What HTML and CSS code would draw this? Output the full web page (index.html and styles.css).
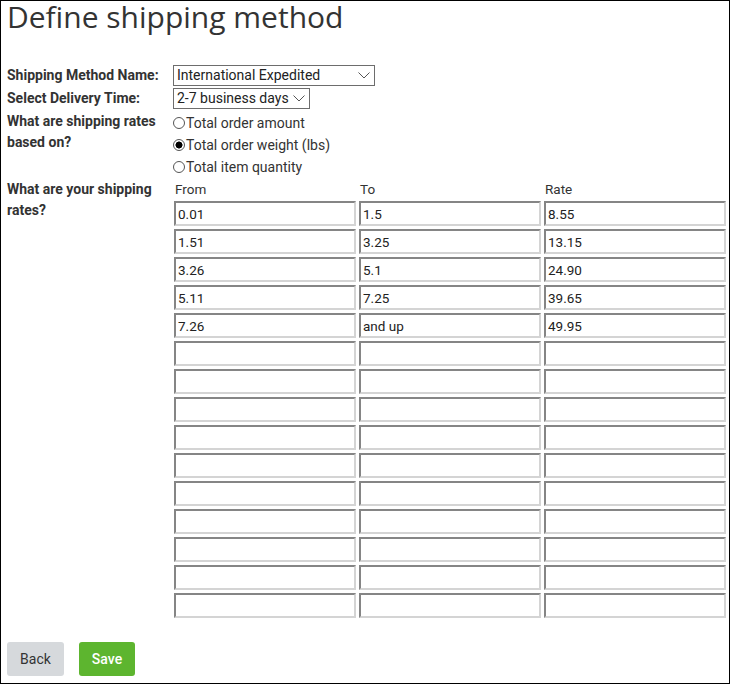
FILE: index.html
```html
<!DOCTYPE html>
<html lang="en">
<head>
<meta charset="utf-8">
<title>Define shipping method</title>
<link rel="stylesheet" href="styles.css">
</head>
<body>
<div class="page">
  <h1 class="title">Define shipping method</h1>
  <form class="form">
    <label class="label" for="method">Shipping Method Name:</label>
    <div class="field">
      <span class="select-wrap wide">
        <select id="method" class="select"><option>International Expedited</option></select>
        <svg class="chev" width="12" height="7" viewBox="0 0 12 7"><path d="M0.5 0.5 L6 6 L11.5 0.5" fill="none" stroke="#555" stroke-width="1"/></svg>
      </span>
    </div>

    <label class="label" for="time">Select Delivery Time:</label>
    <div class="field">
      <span class="select-wrap narrow">
        <select id="time" class="select"><option>2-7 business days</option></select>
        <svg class="chev" width="12" height="7" viewBox="0 0 12 7"><path d="M0.5 0.5 L6 6 L11.5 0.5" fill="none" stroke="#555" stroke-width="1"/></svg>
      </span>
    </div>

    <div class="label">What are shipping rates based on?</div>
    <div class="radios">
      <label class="radio"><input type="radio" name="basis">Total order amount</label>
      <label class="radio"><input type="radio" name="basis" checked>Total order weight (lbs)</label>
      <label class="radio"><input type="radio" name="basis">Total item quantity</label>
    </div>

    <div class="label">What are your shipping rates?</div>
    <div class="rates">
      <div class="head">From</div><div class="head">To</div><div class="head">Rate</div>
      <input class="cell" value="0.01"><input class="cell" value="1.5"><input class="cell" value="8.55">
      <input class="cell" value="1.51"><input class="cell" value="3.25"><input class="cell" value="13.15">
      <input class="cell" value="3.26"><input class="cell" value="5.1"><input class="cell" value="24.90">
      <input class="cell" value="5.11"><input class="cell" value="7.25"><input class="cell" value="39.65">
      <input class="cell" value="7.26"><input class="cell" value="and up"><input class="cell" value="49.95">
      <input class="cell"><input class="cell"><input class="cell">
      <input class="cell"><input class="cell"><input class="cell">
      <input class="cell"><input class="cell"><input class="cell">
      <input class="cell"><input class="cell"><input class="cell">
      <input class="cell"><input class="cell"><input class="cell">
      <input class="cell"><input class="cell"><input class="cell">
      <input class="cell"><input class="cell"><input class="cell">
      <input class="cell"><input class="cell"><input class="cell">
      <input class="cell"><input class="cell"><input class="cell">
      <input class="cell"><input class="cell"><input class="cell">
    </div>
  </form>
  <div class="actions">
    <button class="btn btn-back" type="button">Back</button>
    <button class="btn btn-save" type="button">Save</button>
  </div>
</div>
</body>
</html>
```

FILE: styles.css
```css
html, body {
  margin: 0;
  padding: 0;
  background: #fff;
}
body {
  font-family: Roboto, "Liberation Sans", Arial, sans-serif;
  font-size: 14px;
  color: #333;
}
.page {
  box-sizing: border-box;
  width: 730px;
  height: 684px;
  border: 1px solid #000;
  padding: 0 0 0 6px;
}
.title {
  margin: -5px 0 28px 0;
  font-family: "Open Sans", "DejaVu Sans", sans-serif;
  font-weight: 400;
  font-size: 30px;
  line-height: 41px;
  color: #333;
}
.form {
  display: grid;
  grid-template-columns: 166px 1fr;
  row-gap: 2px;
}
.label {
  font-weight: 700;
  font-size: 14px;
  line-height: 21px;
  color: #333;
  padding-right: 6px;
}
.field {
  display: flex;
  align-items: center;
  height: 21px;
}
.select-wrap {
  position: relative;
  display: inline-block;
  height: 21px;
}
.select-wrap.wide { width: 202px; }
.select-wrap.narrow { width: 137px; }
.select {
  -webkit-appearance: none;
  appearance: none;
  box-sizing: border-box;
  width: 100%;
  height: 21px;
  margin: 0;
  padding: 0 18px 0 3px;
  border: 1px solid #6d6d6d;
  border-radius: 0;
  background: #fff;
  font-family: Roboto, "Liberation Sans", Arial, sans-serif;
  font-size: 14px;
  color: #222;
  line-height: 19px;
}
.chev {
  position: absolute;
  right: 5px;
  top: 7px;
  pointer-events: none;
}
.radios {
  padding-top: 1px;
  margin-bottom: -1px;
  display: flex;
  flex-direction: column;
}
.radio {
  display: flex;
  align-items: center;
  height: 22px;
  font-size: 14px;
  color: #333;
}
.radio input {
  -webkit-appearance: none;
  appearance: none;
  box-sizing: border-box;
  width: 12px;
  height: 12px;
  margin: 0 1px 0 0;
  border: 1px solid #555;
  border-radius: 50%;
  background: #fff;
}
.radio input:checked {
  background: radial-gradient(circle, #000 0 3.2px, #fff 3.8px);
}
.rates {
  display: grid;
  grid-template-columns: repeat(3, 182px);
  column-gap: 3px;
  row-gap: 3px;
  margin-left: 1px;
}
.head {
  font-size: 13.5px;
  line-height: 21px;
  color: #333;
  padding-left: 1px;
  margin-bottom: -2px;
}
.cell {
  box-sizing: border-box;
  width: 182px;
  height: 25px;
  margin: 0;
  padding: 0 2px;
  border-style: solid;
  border-width: 2px;
  border-color: #858585 #d4d4d4 #d4d4d4 #858585;
  background: #fff;
  font-family: Roboto, "Liberation Sans", Arial, sans-serif;
  font-size: 13.5px;
  color: #222;
  outline: none;
}
.actions {
  display: flex;
  gap: 15px;
  margin-top: 24px;
}
.btn {
  height: 34px;
  border: none;
  border-radius: 3px;
  font-family: Roboto, "Liberation Sans", Arial, sans-serif;
  font-size: 14px;
  padding: 0;
  cursor: pointer;
}
.btn-back {
  width: 57px;
  background: #d6d9dc;
  color: #333;
}
.btn-save {
  width: 56px;
  background: #5db52f;
  color: #fff;
  font-weight: 500;
}
```
